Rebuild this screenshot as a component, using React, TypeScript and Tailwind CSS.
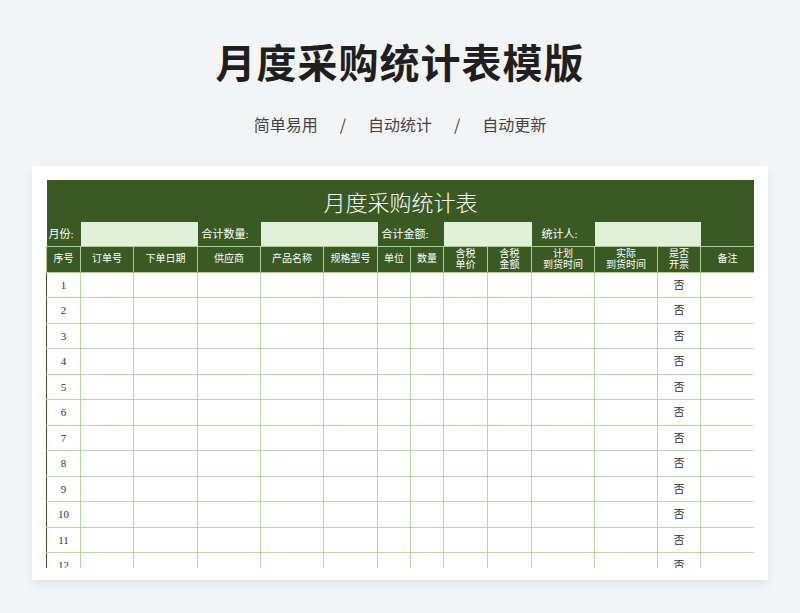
const COLS = [34, 53, 64, 63, 63, 54, 33, 33, 44, 44, 63, 63, 43, 54];
const HEAD: string[][] = [
  ["序号"], ["订单号"], ["下单日期"], ["供应商"], ["产品名称"], ["规格型号"], ["单位"], ["数量"],
  ["含税", "单价"], ["含税", "金额"], ["计划", "到货时间"], ["实际", "到货时间"], ["是否", "开票"], ["备注"],
];
const FONT = { fontFamily: '"Liberation Serif", "Noto Sans CJK SC", serif' };

export default function App() {
  const rows = Array.from({ length: 12 }, (_, i) => i + 1);
  return (
    <div className="w-[800px] h-[613px] bg-[#f3f4f6] overflow-hidden flex flex-col items-center" style={{ fontFamily: '"Noto Sans CJK SC", sans-serif' }}>
      <h1 className="mt-[35px] text-[40px] leading-[52px] font-bold text-[#1f1f1f] tracking-[1px]">月度采购统计表模版</h1>
      <div className="mt-[25px] flex gap-[22px] text-[16px] leading-[24px] text-[#444]">
        <span>简单易用</span><span>/</span><span>自动统计</span><span>/</span><span>自动更新</span>
      </div>
      <div className="mt-[30px] w-[736px] h-[414px] bg-white shadow-[0_4px_10px_rgba(0,0,0,0.08)] px-[14px] pt-[14px]">
        <div className="h-[388px] overflow-hidden" style={FONT}>
          <table className="border-collapse table-fixed" style={{ width: 708 }}>
            <colgroup>{COLS.map((w, i) => <col key={i} style={{ width: w }} />)}</colgroup>
            <tbody>
              <tr className="bg-[#3a5a24] h-[42px]">
                <td colSpan={14} className="text-center text-white text-[22px] font-light pt-[4px]">月度采购统计表</td>
              </tr>
              <tr className="h-[24px] text-[11px] text-white bg-[#3a5a24]">
                <td className="pl-[2px]">月份:</td>
                <td colSpan={2} className="bg-[#e2efd9]" />
                <td colSpan={1} className="pl-[4px]">合计数量:</td>
                <td colSpan={2} className="bg-[#e2efd9]" />
                <td colSpan={2} className="pl-[4px] whitespace-nowrap">合计金额:</td>
                <td colSpan={2} className="bg-[#e2efd9]" />
                <td className="pl-[10px]">统计人:</td>
                <td colSpan={2} className="bg-[#e2efd9]" />
                <td />
              </tr>
              <tr className="h-[26px] bg-[#3a5a24] text-white text-[10px] leading-[11.5px]">
                {HEAD.map((h, i) => (
                  <td key={i} className="border border-[#a9cf8f] text-center align-middle">
                    {h.map((l, j) => <div key={j}>{l}</div>)}
                  </td>
                ))}
              </tr>
              {rows.map((r) => (
                <tr key={r} className="h-[25.5px] text-[11px] text-[#333]">
                  {COLS.map((_, i) => (
                    <td key={i} className={`border border-[#b8d9a3] text-center ${i === 0 ? "border-l-[#3a5a24]" : ""}`}>
                      {i === 0 ? r : i === 12 ? "否" : ""}
                    </td>
                  ))}
                </tr>
              ))}
            </tbody>
          </table>
        </div>
      </div>
    </div>
  );
}
